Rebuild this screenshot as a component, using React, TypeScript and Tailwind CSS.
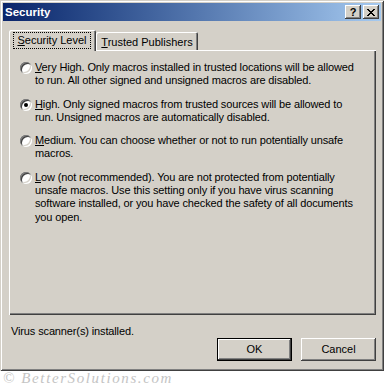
import React from 'react'

const raised =
  'shadow-[inset_-1px_-1px_#404040,inset_1px_1px_#ffffff,inset_-2px_-2px_#808080]'

function Radio({ checked }: { checked?: boolean }) {
  return (
    <span className="relative mt-[1px] block h-[12px] w-[12px] shrink-0 rounded-full bg-white shadow-[inset_1px_1px_#808080,inset_-1px_-1px_#ffffff,inset_2px_2px_#404040,inset_-2px_-2px_#D4D0C8]">
      {checked && (
        <span className="absolute left-[4px] top-[4px] h-[4px] w-[4px] rounded-full bg-black" />
      )}
    </span>
  )
}

interface Level {
  key: string
  rest: string
  lines: string[]
  checked?: boolean
}

const levels: Level[] = [
  {
    key: 'V',
    rest: 'ery High.',
    lines: [
      ' Only macros installed in trusted locations will be allowed',
      'to run. All other signed and unsigned macros are disabled.'
    ]
  },
  {
    key: 'H',
    rest: 'igh.',
    lines: [
      ' Only signed macros from trusted sources will be allowed to',
      'run. Unsigned macros are automatically disabled.'
    ],
    checked: true
  },
  {
    key: 'M',
    rest: 'edium.',
    lines: [' You can choose whether or not to run potentially unsafe', 'macros.']
  },
  {
    key: 'L',
    rest: 'ow (not recommended).',
    lines: [
      ' You are not protected from potentially',
      'unsafe macros. Use this setting only if you have virus scanning',
      'software installed, or you have checked the safety of all documents',
      'you open.'
    ]
  }
]

function CaptionButton({ children }: { children: React.ReactNode }) {
  return (
    <div
      className={`flex h-[14px] w-[16px] items-center justify-center bg-[#D4D0C8] ${raised}`}
    >
      {children}
    </div>
  )
}

export default function App() {
  return (
    <div className="h-[386px] w-[384px] overflow-hidden bg-white font-['Liberation_Sans',Arial,sans-serif] text-[11px] text-black">
      <div className="flex h-[371px] w-[384px] flex-col bg-[#D4D0C8] p-[3px] shadow-[inset_1px_1px_#D4D0C8,inset_-1px_-1px_#404040,inset_2px_2px_#ffffff,inset_-2px_-2px_#808080]">
        {/* title bar */}
        <div className="flex h-[18px] items-center bg-linear-to-r from-[#0A246A] to-[#A6CAF0] pl-[2px] pr-[2px]">
          <span className="flex-1 text-[11.5px] font-bold leading-[18px] text-white">Security</span>
          <div className="flex gap-[2px]">
            <CaptionButton>
              <span className="mt-[1px] text-[11px] font-bold leading-none">?</span>
            </CaptionButton>
            <CaptionButton>
              <svg width="8" height="7" viewBox="0 0 8 7" shapeRendering="crispEdges">
                <path
                  d="M0 0h2v1h-2zM6 0h2v1h-2zM1 1h2v1h-2zM5 1h2v1h-2zM2 2h4v1h-4zM3 3h2v1h-2zM2 4h4v1h-4zM1 5h2v1h-2zM5 5h2v1h-2zM0 6h2v1h-2zM6 6h2v1h-2z"
                  fill="#000"
                />
              </svg>
            </CaptionButton>
          </div>
        </div>

        <div className="flex flex-1 flex-col pl-[6px] pr-[5px] pt-[9px]">
          {/* tabs */}
          <div className="relative z-10 flex h-[21px] items-end">
            <div className="h-[21px] w-[87px] rounded-t-[2px] bg-[#D4D0C8] pl-[4px] pt-[2px] shadow-[inset_1px_1px_#ffffff,inset_-1px_0_#404040,inset_-2px_0_#808080]">
              <div className="flex h-[17px] w-[78px] items-center justify-center border border-dotted border-black leading-[13px]">
                <span>
                  <u className="underline-offset-[1px]">S</u>ecurity Level
                </span>
              </div>
            </div>
            <div className="mb-[1px] flex h-[18px] w-[102px] items-center justify-center rounded-t-[2px] bg-[#D4D0C8] pt-[2px] shadow-[inset_1px_1px_#ffffff,inset_-1px_0_#404040,inset_-2px_0_#808080]">
              <span>
                <u className="underline-offset-[1px]">T</u>rusted Publishers
              </span>
            </div>
          </div>

          {/* panel */}
          <div className="-mt-[1px] flex h-[265px] flex-col gap-[10px] pl-[11px] pt-[11px] tracking-[-0.13px] shadow-[inset_1px_1px_#ffffff,inset_-1px_-1px_#404040,inset_-2px_-2px_#808080]">
            {levels.map((lv) => (
              <div key={lv.key} className="flex gap-[3px]">
                <Radio checked={lv.checked} />
                <div className="whitespace-pre leading-[13.3px]">
                  <u className="underline-offset-[1px]">{lv.key}</u>
                  {lv.rest}
                  {lv.lines[0]}
                  {lv.lines.slice(1).map((l) => (
                    <React.Fragment key={l}>
                      <br />
                      {l}
                    </React.Fragment>
                  ))}
                </div>
              </div>
            ))}
          </div>

          <div className="mt-[10px] pl-[2px] leading-[13px] tracking-[-0.13px]">
            Virus scanner(s) installed.
          </div>

          <div className="flex justify-end gap-[9px]">
            <button className="h-[23px] w-[75px] border border-black bg-[#D4D0C8] shadow-[inset_-1px_-1px_#404040,inset_1px_1px_#ffffff,inset_-2px_-2px_#808080] text-[11px]">
              OK
            </button>
            <button className={`h-[23px] w-[75px] bg-[#D4D0C8] text-[11px] ${raised}`}>
              Cancel
            </button>
          </div>
        </div>
      </div>

      <div className="pl-[3px] font-['Liberation_Serif',serif] text-[15px] italic leading-[15px] tracking-[1.6px] text-[#c4c4c4]">
        © BetterSolutions.com
      </div>
    </div>
  )
}
